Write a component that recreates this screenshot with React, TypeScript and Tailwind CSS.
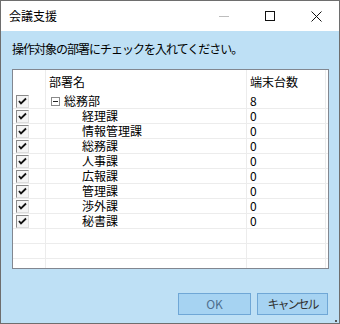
const rows = [
  { name: "総務部", count: "8", root: true },
  { name: "経理課", count: "0" },
  { name: "情報管理課", count: "0" },
  { name: "総務課", count: "0" },
  { name: "人事課", count: "0" },
  { name: "広報課", count: "0" },
  { name: "管理課", count: "0" },
  { name: "渉外課", count: "0" },
  { name: "秘書課", count: "0" },
];

function Check() {
  return (
    <div className="w-[13px] h-[13px] border border-t-[#8a8a8a] border-l-[#8a8a8a] border-r-[#dcdcdc] border-b-[#dcdcdc] bg-[#f4f4f4] flex items-center justify-center">
      <svg width="9" height="9" viewBox="0 0 9 9">
        <path d="M1 4 L3 6.5 L8 1.5" stroke="#111" strokeWidth="1.8" fill="none" />
      </svg>
    </div>
  );
}

function Row({ name, count, root }: { name?: string; count?: string; root?: boolean }) {
  const empty = name === undefined;
  return (
    <div className="flex h-[15px] border-b border-[#ececec] text-[12px] leading-[12px]">
      <div className="w-[33px] border-r border-[#ececec] flex items-center pl-[3px]">{!empty && <Check />}</div>
      <div className="w-[201px] border-r border-[#ececec] flex items-center">
        {!empty && root && (
          <>
            <div className="ml-[5px] w-[9px] h-[9px] border border-[#8a8a8a] flex items-center justify-center">
              <div className="w-[5px] h-px bg-[#222]" />
            </div>
            <span className="ml-[4px]">{name}</span>
          </>
        )}
        {!empty && !root && <span className="ml-[36px]">{name}</span>}
      </div>
      <div className="w-[79px] border-r border-[#ececec] flex items-center pl-[3px]">{count}</div>
      <div className="flex-1" />
    </div>
  );
}

export default function App() {
  return (
    <div
      className="w-[340px] h-[324px] border border-[#6e6e6e] flex flex-col text-black"
      style={{ fontFamily: '"Noto Sans CJK JP", "Noto Sans", sans-serif' }}
    >
      <div className="h-[30px] bg-white flex items-center shrink-0">
        <span className="ml-[8px] text-[12px]">会議支援</span>
        <div className="flex-1" />
        <div className="w-[46px] h-[30px] flex items-center justify-center">
          <div className="w-[10px] h-px bg-[#bdbdbd]" />
        </div>
        <div className="w-[46px] h-[30px] flex items-center justify-center">
          <div className="w-[10px] h-[10px] border border-[#111]" />
        </div>
        <div className="w-[46px] h-[30px] flex items-center justify-center">
          <svg width="11" height="11" viewBox="0 0 11 11">
            <path d="M0.5 0.5 L10.5 10.5 M10.5 0.5 L0.5 10.5" stroke="#111" strokeWidth="1" />
          </svg>
        </div>
      </div>
      <div className="flex-1 bg-[#bee0f5] flex flex-col pl-[11px] relative">
        <div className="h-[16px] mt-[10px] text-[12px] leading-[16px] tracking-[-1px]">操作対象の部署にチェックを入れてください。</div>
        <div className="mt-[12px] w-[317px] h-[200px] border border-[#828790] bg-white flex flex-col overflow-hidden">
          <div className="flex h-[24px] text-[12px]">
            <div className="w-[33px] border-r border-[#ececec]" />
            <div className="w-[201px] border-r border-[#ececec] flex items-center pl-[3px]">部署名</div>
            <div className="w-[79px] border-r border-[#ececec] flex items-center pl-[3px]">端末台数</div>
            <div className="flex-1" />
          </div>
          {rows.map((r) => (
            <Row key={r.name} {...r} />
          ))}
          <Row />
          <Row />
          <div className="flex flex-1">
            <div className="w-[33px] border-r border-[#ececec]" />
            <div className="w-[201px] border-r border-[#ececec]" />
            <div className="w-[79px] border-r border-[#ececec]" />
          </div>
        </div>
        <div className="mt-[24px] flex gap-[6px] pl-[166px]">
          <button className="w-[73px] h-[22px] border border-[#6fa7d6] bg-[#a6d3f2] text-[12px] text-[#4f6f8f]">OK</button>
          <button className="w-[71px] h-[22px] border border-[#6fa7d6] bg-[#a6d3f2] text-[12px] tracking-[-2px] text-[#333]">キャンセル</button>
        </div>
        <div className="absolute right-[2px] bottom-[1px] w-[2px] h-[2px] bg-[#555]" />
      </div>
    </div>
  );
}
